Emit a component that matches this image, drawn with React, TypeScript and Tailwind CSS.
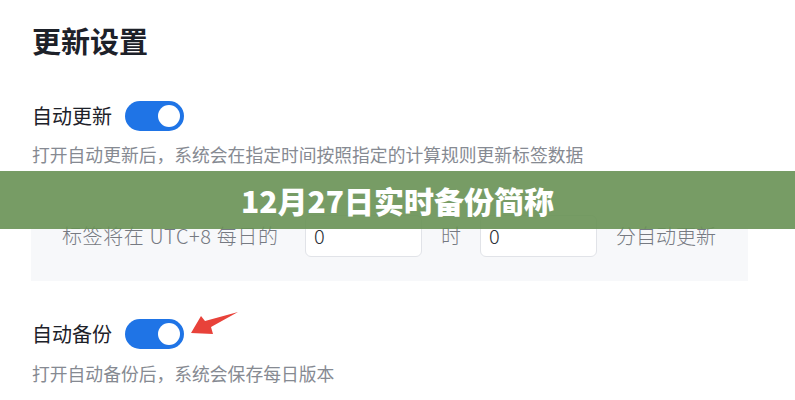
import React from 'react';

function Toggle() {
  return (
    <span className="flex h-[30px] w-[59px] items-center justify-end rounded-full bg-[#1f74e6] pr-[4px]">
      <span className="h-[22px] w-[22px] rounded-full bg-white" />
    </span>
  );
}

function TimeInput({ value }: { value: string }) {
  return (
    <div className="flex h-[42px] w-[117px] shrink-0 items-center rounded-md border border-[#e1e3e8] bg-white px-2 text-[20px] font-light text-[#2b2f36]">
      {value}
    </div>
  );
}

export default function App() {
  return (
    <div
      className="relative h-[400px] w-[795px] overflow-hidden bg-white"
      style={{ fontFamily: '"Noto Sans CJK SC", "Noto Sans", sans-serif' }}
    >
      <div className="flex flex-col px-[31px]">
        {/* Title */}
        <h1 className="ml-px mt-[20px] h-[40px] text-[29px] font-semibold leading-[40px] text-[#1d2129]">
          更新设置
        </h1>

        {/* Auto update */}
        <div className="ml-px mt-[41px] flex items-center gap-[13px]">
          <span className="text-[20px] leading-[30px] text-[#1d2129]">自动更新</span>
          <Toggle />
        </div>
        <p className="ml-px mt-[11px] text-[17.8px] leading-[24px] text-[#868a92]">
          打开自动更新后，系统会在指定时间按照指定的计算规则更新标签数据
        </p>

        {/* Schedule panel */}
        <div className="mt-[24px] flex h-[91px] w-[717px] items-center gap-[19px] whitespace-nowrap bg-[#f7f8fa] px-[31px] text-[20px] font-light text-[#767a82]">
          <span className="w-[224px] shrink-0 tracking-[0.6px]">标签将在 UTC+8 每日的</span>
          <TimeInput value="0" />
          <span>时</span>
          <TimeInput value="0" />
          <span className="shrink-0">分自动更新</span>
        </div>

        {/* Auto backup */}
        <div className="ml-px mt-[38px] flex items-center gap-[13px]">
          <span className="text-[20px] leading-[30px] text-[#1d2129]">自动备份</span>
          <Toggle />
        </div>
        <p className="ml-px mt-[12px] text-[17.8px] leading-[24px] text-[#868a92]">
          打开自动备份后，系统会保存每日版本
        </p>
      </div>

      {/* Red annotation arrow */}
      <svg
        className="absolute left-[188px] top-[310px]"
        width="54"
        height="28"
        viewBox="188 310 54 28"
      >
        <polygon
          points="191,333 201,316 205,321 238,312 211,327 213,334"
          fill="#e8423a"
        />
      </svg>

      {/* Caption band */}
      <div className="absolute left-0 top-[171px] flex h-[58px] w-full items-center justify-center bg-[rgba(104,145,84,0.9)]">
        <span className="text-[30px] font-black text-white">12月27日实时备份简称</span>
      </div>
    </div>
  );
}
